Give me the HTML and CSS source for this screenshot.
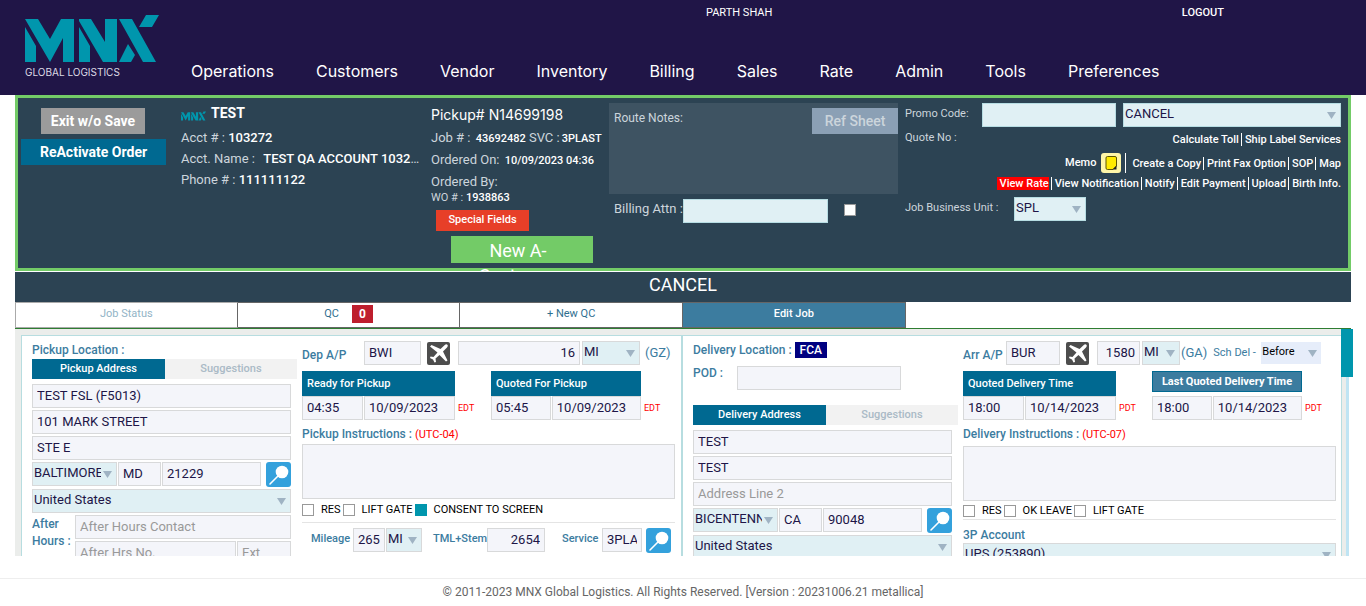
FILE: index.html
```html
<!DOCTYPE html>
<html lang="en">
<head>
<meta charset="utf-8">
<title>MNX Global Logistics - Edit Job</title>
<link rel="stylesheet" href="styles.css">
</head>
<body>
<svg class="defs" aria-hidden="true">
  <symbol id="mnx" viewBox="0 0 134 47">
    <path d="M0 4H13L25 24 36 4H49V47H38V23L25 47Z M0 12 11 31V47H0Z M54 4H66L80 27V4H92V47H78L54 6Z M54 12 65 31V47H54Z M94 4H107L131 47H118Z M121 0H134L127 12H114Z M103 29 110 40 106 47H94Z"/>
  </symbol>
  <symbol id="plane" viewBox="0 0 23 23">
    <rect width="23" height="23" rx="2" fill="#4d4d4d"/>
    <path fill="#fff" d="M20 2.500C21 3 21.200 4 20 5.500L16 9.500 20.500 18.500 19 19.500 12.500 13 8.500 16.500 9 20 7.500 20.500 6 17.500 3 16 3.500 14.500 6.500 15 10.500 10.500 3 4.500 4.500 3 13.500 7 17.500 3.200Q19 2 20 2.500Z"/>
  </symbol>
  <symbol id="lens" viewBox="0 0 25 25">
    <rect width="25" height="25" rx="3" fill="#34a1dc"/>
    <circle cx="16" cy="10" r="6.300" fill="#fff"/>
    <path d="M12 14 4 22" stroke="#fff" stroke-width="1.600" stroke-linecap="round"/>
  </symbol>
</svg>

<header class="top">
  <a class="brand" href="#"><svg class="brand-mark"><use href="#mnx"/></svg><span>GLOBAL LOGISTICS</span></a>
  <div class="top-main">
    <div class="session"><span class="user">PARTH SHAH</span><a class="logout" href="#">LOGOUT</a></div>
    <nav class="menu">
      <a href="#">Operations</a><a href="#">Customers</a><a href="#">Vendor</a><a href="#">Inventory</a><a href="#">Billing</a><a href="#">Sales</a><a href="#">Rate</a><a href="#">Admin</a><a href="#">Tools</a><a href="#">Preferences</a>
    </nav>
  </div>
</header>

<main class="page">
  <section class="summary">
    <div class="actions">
      <button class="btn exit" type="button">Exit w/o Save</button>
      <button class="btn reactivate" type="button">ReActivate Order</button>
    </div>
    <div class="account">
      <p class="acct-title"><svg class="mini-mark"><use href="#mnx"/></svg><b>TEST</b></p>
      <p>Acct # : <b>103272</b></p>
      <p class="ellipsis">Acct. Name : <b class="indent">TEST QA ACCOUNT 103272</b></p>
      <p>Phone # : <b>111111122</b></p>
    </div>
    <div class="order">
      <p class="pickup-no">Pickup# N14699198</p>
      <p>Job # : <b class="small">43692482</b> SVC :<b class="small">3PLAST</b></p>
      <p>Ordered On: <b class="small">10/09/2023 04:36</b></p>
      <p>Ordered By:</p>
      <p class="wo">WO # : <b>1938863</b></p>
      <button class="special" type="button">Special Fields</button>
      <button class="quote" type="button">New A-Customer</button>
    </div>
    <div class="notes">
      <div class="route"><span>Route Notes:</span><button class="ref" type="button">Ref Sheet</button></div>
      <div class="billing"><label for="attn">Billing Attn :</label><input class="pale" id="attn" type="text"><input class="box" type="checkbox" aria-label="Billing attention"></div>
    </div>
    <div class="promo">
      <div class="promo-row"><label for="promo">Promo Code:</label><input class="pale promo-code" id="promo" type="text"><select class="pale status" aria-label="Status"><option>CANCEL</option></select></div>
      <div class="quote-row"><span>Quote No :</span><div class="links"><a href="#">Calculate Toll</a><a href="#">Ship Label Services</a></div></div>
      <div class="memo-row">
        <a class="memo" href="#">Memo
          <svg class="note" viewBox="0 0 20 20"><rect width="20" height="20" rx="3" fill="#fff6a8"/><path d="M6.500 3.500H14Q15.500 3.500 15.500 5V13L12 16.500H6.500Q5 16.500 5 15V5Q5 3.500 6.500 3.500Z" fill="#ffea00" stroke="#5c5400"/><path d="M15.500 12.500V16.500H11.500Z" fill="#222"/></svg></a>
        <div class="links"><a href="#">Create a Copy</a><a href="#">Print Fax Option</a><a href="#">SOP</a><a href="#">Map</a></div>
      </div>
      <div class="links rates"><a class="hot" href="#">View Rate</a><a href="#">View Notification</a><a href="#">Notify</a><a href="#">Edit Payment</a><a href="#">Upload</a><a href="#">Birth Info.</a></div>
      <div class="unit-row"><label for="unit">Job Business Unit :</label><select class="pale unit" id="unit"><option>SPL</option></select></div>
    </div>
  </section>

  <h1 class="state">CANCEL</h1>
  <nav class="tabs">
    <a class="muted" href="#">Job Status</a><a href="#">QC <span class="count">0</span></a><a href="#">+ New QC</a><a class="active" href="#">Edit Job</a>
  </nav>

  <div class="scroller">
    <form class="job">
      <section class="half pickup">
        <div class="address">
          <h2>Pickup Location :</h2>
          <div class="switch"><button class="on" type="button">Pickup Address</button><button type="button">Suggestions</button></div>
          <div class="stack">
            <input type="text" value="TEST FSL (F5013)" aria-label="Company">
            <input type="text" value="101 MARK STREET" aria-label="Address line 1">
            <input type="text" value="STE E" aria-label="Address line 2">
            <div class="city"><select aria-label="City"><option>BALTIMORE</option></select><input type="text" value="MD" aria-label="State"><input type="text" value="21229" aria-label="Zip"><button class="find" type="button" aria-label="Search"><svg><use href="#lens"/></svg></button></div>
            <select class="country" aria-label="Country"><option>United States</option></select>
          </div>
          <div class="after"><label for="ahc">After Hours :</label>
            <div class="after-fields"><input id="ahc" class="wide" type="text" placeholder="After Hours Contact"><input type="text" placeholder="After Hrs No." aria-label="After hours number"><input type="text" placeholder="Ext" aria-label="Extension"></div>
          </div>
        </div>
        <div class="details">
          <div class="airport dep"><label for="dep">Dep A/P</label><input id="dep" class="code" type="text" value="BWI"><button class="plane" type="button" aria-label="Airport"><svg><use href="#plane"/></svg></button><input class="dist" type="text" value="16" aria-label="Distance"><select class="measure" aria-label="Distance unit"><option>MI</option></select><span class="zone">(GZ)</span></div>
          <div class="times">
            <div class="slot"><div class="slot-title">Ready for Pickup</div><div class="slot-fields"><input type="text" value="04:35" aria-label="Ready time"><input type="text" value="10/09/2023" aria-label="Ready date"></div></div><span class="tz">EDT</span>
            <div class="slot"><div class="slot-title">Quoted For Pickup</div><div class="slot-fields"><input type="text" value="05:45" aria-label="Quoted time"><input type="text" value="10/09/2023" aria-label="Quoted date"></div></div><span class="tz">EDT</span>
          </div>
          <label class="instr" for="pins">Pickup Instructions : <span>(UTC-04)</span></label>
          <textarea id="pins"></textarea>
          <div class="checks"><label><input class="box" type="checkbox">RES</label><label><input class="box" type="checkbox">LIFT GATE</label><label><input class="box" type="checkbox" checked>CONSENT TO SCREEN</label></div>
          <div class="mileage"><label for="mil">Mileage</label><input id="mil" class="miles" type="text" value="265"><select aria-label="Mileage unit"><option>MI</option></select><label class="tml" for="tml">TML+Stem</label><input id="tml" class="stem" type="text" value="2654"><label class="svc" for="svc">Service</label><input id="svc" class="service" type="text" value="3PLAST"><button class="find" type="button" aria-label="Search"><svg><use href="#lens"/></svg></button></div>
        </div>
      </section>
      <section class="half delivery">
        <div class="address">
          <h2>Delivery Location : <span class="fca">FCA</span></h2>
          <div class="pod"><label for="pod">POD :</label><input id="pod" type="text"></div>
          <div class="switch"><button class="on" type="button">Delivery Address</button><button type="button">Suggestions</button></div>
          <div class="stack">
            <input type="text" value="TEST" aria-label="Company">
            <input type="text" value="TEST" aria-label="Address line 1">
            <input type="text" placeholder="Address Line 2" aria-label="Address line 2">
            <div class="city"><select aria-label="City"><option>BICENTENNIAL</option></select><input type="text" value="CA" aria-label="State"><input type="text" value="90048" aria-label="Zip"><button class="find" type="button" aria-label="Search"><svg><use href="#lens"/></svg></button></div>
            <select class="country" aria-label="Country"><option>United States</option></select>
          </div>
        </div>
        <div class="details">
          <div class="airport arr"><label for="arr">Arr A/P</label><input id="arr" class="code" type="text" value="BUR"><button class="plane" type="button" aria-label="Airport"><svg><use href="#plane"/></svg></button><input class="dist" type="text" value="1580" aria-label="Distance"><select class="measure" aria-label="Distance unit"><option>MI</option></select><span class="zone">(GA)</span><label class="sched" for="sched">Sch Del -</label><select id="sched" class="before"><option>Before</option></select></div>
          <div class="times">
            <div class="slot"><div class="slot-title">Quoted Delivery Time</div><div class="slot-fields"><input type="text" value="18:00" aria-label="Quoted time"><input type="text" value="10/14/2023" aria-label="Quoted date"></div></div><span class="tz">PDT</span>
            <div class="slot"><button class="last" type="button">Last Quoted Delivery Time</button><div class="slot-fields"><input type="text" value="18:00" aria-label="Last quoted time"><input type="text" value="10/14/2023" aria-label="Last quoted date"></div></div><span class="tz">PDT</span>
          </div>
          <label class="instr" for="dins">Delivery Instructions : <span>(UTC-07)</span></label>
          <textarea id="dins"></textarea>
          <div class="checks"><label><input class="box" type="checkbox">RES</label><label><input class="box" type="checkbox">OK LEAVE</label><label><input class="box" type="checkbox">LIFT GATE</label></div>
          <label class="third" for="third">3P Account</label>
          <select class="country" id="third"><option>UPS (253890)</option></select>
        </div>
      </section>
    </form>
    <div class="bar"><div class="thumb"></div></div>
  </div>
</main>
<footer>© 2011-2023 MNX Global Logistics. All Rights Reserved. [Version : 20231006.21 metallica]</footer>
</body>
</html>
```
FILE: styles.css
```css
* { box-sizing: border-box; }
body { margin: 0; height: 100vh; display: flex; flex-direction: column; overflow: hidden; background: #fff; font: 13px/20px Roboto, sans-serif; color: #201547; }
p, h1, h2 { margin: 0; font-weight: 400; }
a { color: inherit; text-decoration: none; }
b { font-weight: 500; color: #fff; }
button { border: 0; padding: 0; font: inherit; color: #fff; }
svg { display: block; }
.defs { position: absolute; width: 0; height: 0; }

/* fields */
input, select, textarea { font: 13px/20px Roboto, sans-serif; color: #201547; margin: 0; border-radius: 0; outline: 0; min-width: 0; }
input[type="text"], textarea { background: #f4f5fa; border: 1px solid #d8d9da; }
input[type="text"] { height: 24px; padding: 0 4px 2px; }
input::placeholder { color: #999; }
textarea { display: block; width: 100%; height: 55px; resize: none; }
select { appearance: none; height: 24px; padding: 0 15px 2px 1px; border: 1px solid #d8d9da; background: #e0f0f4 url("data:image/svg+xml,%3Csvg xmlns='http://www.w3.org/2000/svg' width='9' height='7'%3E%3Cpath d='M0 0H9L4.500 7Z' fill='%239fb3c3'/%3E%3C/svg%3E") no-repeat right 4px top 8px; }
input.pale[type="text"], select.pale { background-color: #e0f0f4; border-color: #b7dde3; }
.box { appearance: none; flex: none; width: 12px; height: 12px; border: 1px solid #999; background: #fff; }
.box:checked { background: #0096ad; border-color: #0096ad; }

/* header */
.top { background: #201547; color: #fff; height: 95px; flex: none; display: grid; grid-template-columns: 166px 1fr; padding: 0 25px; }
.brand { padding-top: 15px; font: 10px/14px Inter, sans-serif; color: #dcdae5; white-space: nowrap; }
.brand-mark { width: 134px; height: 47px; fill: #0096ad; margin-bottom: 3px; }
.session { display: flex; justify-content: space-between; padding: 3px 117px 0 515px; font-size: 11px; }
.logout { font-weight: 500; }
.menu { display: flex; gap: 42px; padding-top: 38px; font: 16px/20px Inter, sans-serif; white-space: nowrap; }

/* order summary */
.page { flex: 1; min-height: 0; display: flex; flex-direction: column; padding: 0 15px; }
.summary { flex: none; height: 176px; background: #2c4353; border: 3px solid #73cb67; display: grid; grid-template-columns: 160px 250px 178px 289fr 443fr; padding: 5px 7px 0 3px; color: #ccd5dc; white-space: nowrap; }
.actions { display: flex; flex-direction: column; align-items: flex-start; gap: 5px; padding-top: 5px; }
.btn { height: 26px; font-size: 14px; font-weight: 700; }
.exit { background: #9b9b9b; width: 104px; margin-left: 20px; }
.reactivate { background: #006991; width: 145px; }
.account { padding-right: 10px; font-size: 13px; line-height: 21px; }
.acct-title { display: flex; align-items: flex-end; gap: 5px; font-size: 14px; line-height: 20px; margin-bottom: 4px; }
.acct-title b { font-weight: 700; }
.mini-mark { width: 25px; height: 10px; margin-bottom: 2px; fill: #0096ad; }
.indent { margin-left: 5px; }
.ellipsis { overflow: hidden; text-overflow: ellipsis; }
.order { line-height: 21px; }
.pickup-no { font: 14px/24px Inter, sans-serif; color: #fff; }
.small { font-size: 11px; margin-left: 2px; }
.wo { font-size: 11px; line-height: 12px; }
.special { display: block; width: 93px; height: 21px; margin: 6px 0 5px 5px; background: #e73f28; font-size: 11px; font-weight: 500; line-height: 18px; padding-bottom: 2px; }
.quote { display: block; width: 142px; height: 27px; margin-left: 20px; padding: 2px 34px 0 26px; background: #73cb67; font-size: 18px; line-height: 25px; white-space: normal; }
.route { height: 91px; padding: 5px 0 0 5px; background: #3e5362; display: flex; justify-content: space-between; align-items: flex-start; font-size: 12px; }
.ref { width: 86px; height: 26px; background: #8ba0b5; color: #ccd5dc; font-size: 14px; font-weight: 500; }
.billing { display: flex; padding: 5px 0 0 5px; }
.billing .pale { width: 145px; margin-right: 16px; }
.billing label { width: 69px; }
.billing .box { margin-top: 5px; }
.promo { padding-left: 7px; font-size: 11px; }
.promo-row, .unit-row { display: flex; line-height: 22px; }
.promo-row label { width: 77px; }
.promo-code { width: 134px; margin-right: 7px; }
.status { flex: 1; }
.quote-row { display: flex; justify-content: space-between; height: 24px; line-height: 22px; }
.links { display: flex; justify-content: flex-end; align-items: center; color: #fff; font-weight: 500; line-height: 13px; padding-top: 1px; }
.links a + a { border-left: 1px solid #fff; margin-left: 2px; padding-left: 3px; }
.memo-row { display: flex; justify-content: flex-end; align-items: center; height: 24px; }
.memo { display: flex; align-items: center; gap: 5px; color: #fff; font-weight: 500; border-right: 1px solid #fff; padding-right: 4px; margin-right: 6px; }
.note { width: 20px; height: 20px; }
.rates { height: 16px; }
.hot { background: #f00; padding-left: 3px; }
.unit-row { padding-top: 6px; }
.unit-row label { width: 109px; }
.unit { width: 72px; }

/* job tabs */
.state { flex: none; position: relative; margin-top: 1px; height: 30px; background: #2c4353; color: #fff; text-align: center; font-size: 18px; line-height: 26px; }
.tabs { flex: none; display: grid; grid-template-columns: repeat(6, 1fr); border-bottom: 1px solid #2e7d32; height: 27px; }
.tabs a { border: 1px solid #666; border-left-width: 0; display: flex; justify-content: center; align-items: center; gap: 13px; padding-bottom: 3px; color: #2f6f8f; font-size: 11px; }
.tabs .muted { border: 1px solid #aaa; border-right-color: #666; color: #92b4c6; }
.tabs .active { background: #3c7c9f; color: #fff; font-weight: 500; }
.count { width: 21px; height: 18px; background: #be1e2d; color: #fff; font: 700 12px/18px Roboto, sans-serif; text-align: center; }

/* job form */
.scroller { flex: 1; min-height: 0; position: relative; clip-path: inset(0 -2px 0 0); background: #ebedeb; padding: 6px 9px 0 6px; }
.job { display: grid; grid-template-columns: 661fr 658fr; border: 1px solid #b7dde0; background: #fff; color: #3c7c9f; }
.bar { position: absolute; top: 0; right: -2px; width: 12px; height: 100%; background: linear-gradient(to right, transparent 5px, #bfe4f3 5px, #bfe4f3 8px, #fff 8px); }
.thumb { height: 48px; background: #0096ad; }
.half { display: grid; grid-template-columns: 259fr 373fr; column-gap: 11px; padding: 5px 5px 0 10px; }
.pickup { border-right: 2px solid #b7dde0; padding-right: 6px; }
h2, .job label { font-size: 12px; font-weight: 500; }
h2 { line-height: 18px; white-space: nowrap; }
.switch { display: grid; grid-template-columns: 133px 1fr; margin-right: -6px; }
.switch button { height: 20px; background: #f2f2f2; color: #aabac6; font-size: 11px; font-weight: 500; }
.switch .on { background: #006991; color: #fff; }
.stack { display: flex; flex-direction: column; gap: 2px; padding-top: 5px; }
.city { display: grid; grid-template-columns: 85px 43px 1fr 29px; column-gap: 1px; height: 25px; }
.find { margin-left: 4px; background: none; }
.find svg { width: 25px; height: 25px; }
.country { width: 100%; }
.after { display: grid; grid-template-columns: 43px 1fr; padding-top: 2px; }
.after label { line-height: 17px; padding-top: 1px; }
.after-fields { display: grid; grid-template-columns: 161fr 54fr; gap: 2px 1px; }
.wide { grid-column: 1 / 3; }
.pod { display: flex; height: 46px; padding-top: 7px; }
.pod label { width: 44px; line-height: 14px; }
.pod input { width: 164px; }
.fca { display: inline-block; background: #000080; color: #fff; line-height: 16px; padding: 0 5px; }
.airport { display: flex; align-items: flex-start; height: 30px; white-space: nowrap; }
.airport label { line-height: 28px; }
.airport .zone { line-height: 24px; }
.plane { background: none; padding: 1px 8px 0 6px; }
.plane svg { width: 23px; height: 23px; }
.dist { text-align: right; }
.dep label { width: 62px; }
.dep .code { width: 57px; }
.dep .dist { width: 122px; margin-right: 2px; }
.dep .measure { width: 58px; margin-right: 5px; }
.arr label { width: 43px; }
.arr .code { width: 54px; }
.arr .dist { width: 43px; margin-right: 2px; }
.arr .measure { width: 38px; margin-right: 1px; }
.job .sched { width: 48px; margin-left: 6px; line-height: 24px; font-size: 11px; font-weight: 400; }
.before { width: 60px; height: 22px; margin-top: 1px; border: 0; background-color: #e6edfa; color: #000; font-size: 11px; }
.times { display: grid; grid-template-columns: 153px 36px 150px 1fr; }
.slot-title { height: 25px; background: #006991; color: #fff; font-size: 11px; font-weight: 500; line-height: 25px; padding-left: 5px; }
.last { display: block; width: 100%; height: 21px; margin-bottom: 4px; border: 1px solid #006991; background: #3c7c9f; font-size: 11px; font-weight: 700; line-height: 18px; }
.slot-fields { display: grid; grid-template-columns: 61fr 91fr; column-gap: 1px; }
.tz { align-self: end; padding-left: 3px; color: #f00; font-size: 9px; line-height: 23px; }
.instr { display: block; line-height: 24px; padding-top: 2px; height: 24px; }
.delivery .instr { height: 26px; }
.instr span { color: #f00; font-size: 11px; font-weight: 400; }
.checks { display: flex; gap: 2px; align-items: center; height: 24px; padding-bottom: 2px; border-bottom: 1px solid #e4e4e4; white-space: nowrap; }
.delivery .checks { height: 19px; padding: 2px 0 0; }
.job .checks label { display: flex; align-items: center; gap: 7px; color: #000; font-size: 11px; font-weight: 400; }
.mileage { display: flex; padding-top: 5px; }
.job .mileage label { width: 51px; padding-left: 9px; font-size: 11px; line-height: 22px; }
.miles { width: 32px; margin-right: 1px; }
.mileage select { width: 36px; }
.job .mileage .tml { width: 65px; padding-left: 11px; }
.stem { width: 58px; text-align: right; }
.job .mileage .svc { width: 57px; padding-left: 17px; }
.service { width: 40px; }
.third { display: block; padding-top: 5px; height: 23px; }
footer { flex: none; margin-top: 22px; height: 28px; border-top: 1px solid #eee; text-align: center; color: #666; font-size: 12px; line-height: 26px; }
```
